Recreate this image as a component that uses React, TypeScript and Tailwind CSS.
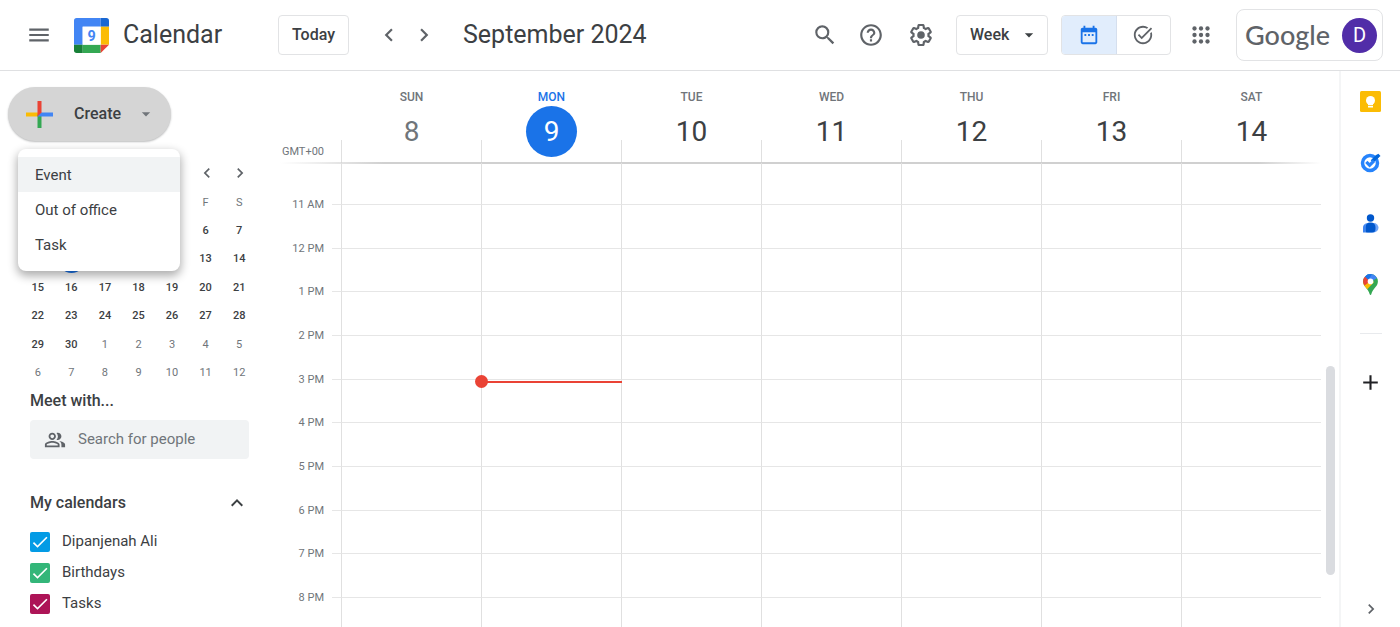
import { useState } from "react";
import {
  MdAdd,
  MdArrowDropDown,
  MdCheck,
  MdChevronLeft,
  MdChevronRight,
  MdDateRange,
  MdExpandLess,
  MdHelpOutline,
  MdMenu,
  MdOutlinePeopleAlt,
  MdSearch,
  MdTaskAlt,
} from "react-icons/md";

type Day = { name: string; date: number; past?: boolean; today?: boolean };

const DAYS: Day[] = [
  { name: "SUN", date: 8, past: true },
  { name: "MON", date: 9, today: true },
  { name: "TUE", date: 10 },
  { name: "WED", date: 11 },
  { name: "THU", date: 12 },
  { name: "FRI", date: 13 },
  { name: "SAT", date: 14 },
];

// each row ends on the line of the hour that it names
const HOURS = [
  "11 AM",
  "12 PM",
  "1 PM",
  "2 PM",
  "3 PM",
  "4 PM",
  "5 PM",
  "6 PM",
  "7 PM",
  "8 PM",
  "",
];

const WEEKDAYS = ["S", "M", "T", "W", "T", "F", "S"];

const MENU = ["Event", "Out of office", "Task"];

const CALENDARS = [
  { name: "Dipanjenah Ali", color: "bg-[#039be5]" },
  { name: "Birthdays", color: "bg-[#33b679]" },
  { name: "Tasks", color: "bg-[#ad1457]" },
];

// 1 September 2024 is a Sunday, so the month starts in the first cell
const WEEKS = Array.from({ length: 6 }, (_, w) =>
  Array.from({ length: 7 }, (_, d) => {
    const n = w * 7 + d + 1;
    return n > 30 ? { date: n - 30, other: true } : { date: n, other: false };
  }),
);

function CalendarLogo() {
  return (
    <svg viewBox="0 0 105 105" className="size-[35px]" role="img" aria-label="Calendar logo">
      <path d="M8 0h72v26H26v54H0V8a8 8 0 0 1 8-8z" fill="#4285f4" />
      <path d="M80 0h17a8 8 0 0 1 8 8v18H80z" fill="#1967d2" />
      <path d="M80 26h25v54H80z" fill="#fbbc04" />
      <path d="M26 80h54v25H26z" fill="#34a853" />
      <path d="M0 80h26v25H8a8 8 0 0 1-8-8z" fill="#188038" />
      <path d="M80 80h25l-25 25z" fill="#ea4335" />
      <path d="M26 26h54v54H26z" fill="#fff" />
      <text
        x="53"
        y="68"
        textAnchor="middle"
        fontSize="43"
        fontWeight="700"
        fontFamily="Roboto, sans-serif"
        fill="#4285f4"
      >
        9
      </text>
    </svg>
  );
}

function SettingsIcon() {
  return (
    <svg viewBox="0 0 24 24" fill="currentColor" className="size-[26px]">
      <path d="M13.85 22.25h-3.7c-.74 0-1.36-.54-1.45-1.27l-.27-1.89c-.27-.14-.53-.29-.79-.46l-1.8.72c-.7.26-1.47-.03-1.81-.65L2.2 15.53c-.35-.66-.2-1.44.36-1.88l1.53-1.19c-.01-.15-.02-.3-.02-.46 0-.15.01-.31.02-.46l-1.52-1.19c-.59-.45-.74-1.26-.37-1.88l1.85-3.19c.34-.62 1.11-.9 1.79-.63l1.81.73c.26-.17.52-.32.78-.46l.27-1.91c.09-.7.71-1.25 1.44-1.25h3.7c.74 0 1.36.54 1.45 1.27l.27 1.89c.27.14.53.29.79.46l1.8-.72c.71-.26 1.48.03 1.82.65l1.84 3.18c.36.66.2 1.44-.36 1.88l-1.52 1.19c.01.15.02.3.02.46s-.01.31-.02.46l1.52 1.19c.56.45.72 1.23.37 1.86l-1.86 3.22c-.34.62-1.11.9-1.8.63l-1.8-.72c-.26.17-.52.32-.78.46l-.27 1.91c-.1.68-.72 1.22-1.46 1.22zm-3.23-2h2.76l.37-2.55.53-.22c.44-.18.88-.44 1.34-.78l.45-.34 2.38.96 1.38-2.4-2.03-1.58.07-.56c.03-.26.06-.51.06-.78s-.03-.53-.06-.78l-.07-.56 2.03-1.58-1.39-2.4-2.39.96-.45-.35c-.42-.32-.87-.58-1.33-.77l-.52-.22-.37-2.55h-2.76l-.37 2.55-.53.21c-.44.19-.88.44-1.34.79l-.45.33-2.38-.95-1.39 2.39 2.03 1.58-.07.56a7 7 0 0 0-.06.79c0 .26.02.53.06.78l.07.56-2.03 1.58 1.38 2.4 2.39-.96.45.35c.43.33.86.58 1.33.77l.53.22.38 2.55z" />
      <circle cx="12" cy="12" r="3.5" />
    </svg>
  );
}

function AppsIcon() {
  return (
    <svg viewBox="0 0 24 24" fill="currentColor" className="size-[26px]">
      {[6, 12, 18].map((y) =>
        [6, 12, 18].map((x) => <circle key={`${x}-${y}`} cx={x} cy={y} r="2" />),
      )}
    </svg>
  );
}

function CreatePlusIcon() {
  return (
    <svg viewBox="0 0 27 27" className="size-[27px]">
      <path d="M0 11.500h13.500v4H0z" fill="#fbbc04" />
      <path d="M11.500 13.500h4V27h-4z" fill="#34a853" />
      <path d="M13.500 11.500H27v4H11.500z" fill="#4285f4" />
      <path d="M11.500 0h4v11.500l-4 4z" fill="#ea4335" />
    </svg>
  );
}

function KeepIcon() {
  return (
    <svg viewBox="0 0 21 21" className="size-[21px]">
      <rect width="21" height="21" rx="1.500" fill="#fbbc04" />
      <circle cx="10.500" cy="9.500" r="4.500" fill="#fff" />
      <path d="M8 12.500h5v1.800H8zM8 15h5v1.500H8z" fill="#fff" />
    </svg>
  );
}

function TasksIcon() {
  return (
    <svg viewBox="0 0 21 21" className="size-[21px]">
      <circle cx="10" cy="11" r="7.500" fill="none" stroke="#2684fc" strokeWidth="3.500" />
      <path d="M12 9.500 17.500 4" fill="none" stroke="#0066da" strokeWidth="3.500" />
      <path d="M15.800 3.200 18.400 1.800 20.500 4 17 7z" fill="#0066da" />
      <path d="M6.300 9.900l3.300 3.300L14 8.800" fill="none" stroke="#2684fc" strokeWidth="3.200" />
    </svg>
  );
}

function ContactsIcon() {
  return (
    <svg viewBox="0 0 21 21" className="size-[21px]">
      <circle cx="10.500" cy="5" r="3.700" fill="#0057cc" />
      <rect x="3" y="10" width="15.500" height="9.500" rx="4.700" fill="#6ea4f8" />
      <path
        d="M5.500 19.500V14a4.500 4.500 0 0 1 4.500-4.500h1a4.500 4.500 0 0 1 4.500 4.500v2a3.500 3.500 0 0 1-3.500 3.500z"
        fill="#0057cc"
      />
      <path d="M3 19.500V15a5 5 0 0 1 2.500-4.300v8.800z" fill="#3c83f0" />
    </svg>
  );
}

function MapsIcon() {
  return (
    <svg viewBox="0 0 15 21" className="h-[21px] w-[15px]">
      <clipPath id="pin">
        <path d="M7.500 0A7.400 7.400 0 0 0 .1 7.400c0 5.400 5.200 6.600 6.600 12.800.2.900 1.400.9 1.600 0 1.400-6.200 6.600-7.400 6.600-12.800A7.400 7.400 0 0 0 7.500 0z" />
      </clipPath>
      <g clipPath="url(#pin)">
        <path d="M0 0h15v21H0z" fill="#34a853" />
        <path d="M0 9 5 5.500 11 8 3.500 16 0 14z" fill="#fbbc04" />
        <path d="M0 0 3 2.500 7.500 7 1.500 11.500 0 9z" fill="#ea4335" />
        <path d="M2 2.500 4 0h11v3.500L7.500 8z" fill="#4285f4" />
        <path d="M2 2.500 4 0h5L5.500 6z" fill="#1a73e8" />
      </g>
      <circle cx="7.500" cy="7.400" r="2.800" fill="#fff" />
    </svg>
  );
}

function TopBar() {
  const [view, setView] = useState("Week");
  return (
    <header className="flex h-[71px] shrink-0 items-center border-b border-[#dfe0e2] pr-[17px] text-[#5f6368]">
      <div className="flex w-[278px] shrink-0 items-center pl-[26px]">
        <button type="button" aria-label="Main menu">
          <MdMenu size={26} />
        </button>
        <a href="#calendar" className="ml-[22px] flex items-center gap-3.5">
          <CalendarLogo />
          <span className="text-[25px] text-[#3c4043]">Calendar</span>
        </a>
      </div>
      <button
        type="button"
        className="h-10 w-[71px] shrink-0 rounded border border-[#e2e3e5] text-base font-medium text-[#3c4043]"
      >
        Today
      </button>
      <div className="ml-[27px] flex gap-[9px]">
        <button type="button" aria-label="Previous week">
          <MdChevronLeft size={26} />
        </button>
        <button type="button" aria-label="Next week">
          <MdChevronRight size={26} />
        </button>
      </div>
      <h1 className="ml-[26px] text-[25px] whitespace-nowrap text-[#3c4043]">September 2024</h1>

      <div className="ml-auto flex shrink-0 items-center">
        <button type="button" aria-label="Search">
          <MdSearch size={26} />
        </button>
        <button type="button" aria-label="Support" className="ml-5">
          <MdHelpOutline size={26} />
        </button>
        <button type="button" aria-label="Settings" className="ml-6">
          <SettingsIcon />
        </button>
        <div className="relative ml-[22px]">
          <select
            aria-label="View"
            value={view}
            onChange={(e) => setView(e.target.value)}
            className="h-10 w-[92px] appearance-none rounded border border-[#e2e3e5] bg-white pl-[13px] text-base font-medium text-[#3c4043]"
          >
            <option>Day</option>
            <option>Week</option>
            <option>Month</option>
          </select>
          <MdArrowDropDown
            size={20}
            className="pointer-events-none absolute top-2.5 right-[9px] text-[#3c4043]"
          />
        </div>
        <div className="ml-[13px] flex h-10 w-[110px] overflow-hidden rounded border border-[#e2e3e5]">
          <button
            type="button"
            aria-label="Switch to Calendar"
            className="flex flex-1 items-center justify-center border-r border-[#d5dfee] bg-[#e1edfc] text-[#1a73e8]"
          >
            <MdDateRange size={22} />
          </button>
          <button
            type="button"
            aria-label="Switch to Tasks"
            className="flex flex-1 items-center justify-center"
          >
            <MdTaskAlt size={22} />
          </button>
        </div>
        <button type="button" aria-label="Google apps" className="ml-[17px]">
          <AppsIcon />
        </button>
        <a
          href="#account"
          className="ml-[22px] flex h-[52px] w-[147px] items-center justify-between rounded-lg border border-[#e2e3e5] pr-[5px] pl-2"
        >
          <span className="font-[Lato,sans-serif] text-[27px] leading-8 font-medium text-[#5f6368]">
            Google
          </span>
          <span className="flex size-[35px] items-center justify-center rounded-full bg-[#512da8] text-xl text-white">
            D
          </span>
        </a>
      </div>
    </header>
  );
}

function CreateMenu() {
  return (
    <div className="relative ml-2 w-[163px]">
      <button
        type="button"
        aria-haspopup="menu"
        aria-expanded="true"
        className="flex h-[54px] w-full items-center rounded-full bg-[#d5d5d5] pl-[18px] text-base font-medium text-[#3c4043] shadow-[0_1px_2px_rgba(60,64,67,0.35)]"
      >
        <CreatePlusIcon />
        <span className="ml-[21px]">Create</span>
        <MdArrowDropDown size={20} className="ml-[15px] text-[#70757a]" />
      </button>
      <ul
        role="menu"
        className="absolute top-[62px] left-[10px] z-10 w-[162px] rounded-lg bg-white pt-2 pb-[9px] shadow-[0_4px_10px_1px_rgba(0,0,0,0.32)]"
      >
        {MENU.map((label, i) => (
          <li key={label} role="none">
            <button
              type="button"
              role="menuitem"
              className={`block h-[35px] w-full pt-0.5 pl-[17px] text-left text-[15px] text-[#3c4043] ${
                i === 0 ? "bg-[#f1f3f4]" : ""
              }`}
            >
              {label}
            </button>
          </li>
        ))}
      </ul>
    </div>
  );
}

function MiniMonth() {
  return (
    <section className="mt-4 ml-[21px] w-[235px]">
      <div className="flex h-8 items-center justify-end gap-[13px] pr-1.5 text-[#5f6368]">
        <button type="button" aria-label="Previous month">
          <MdChevronLeft size={20} />
        </button>
        <button type="button" aria-label="Next month">
          <MdChevronRight size={20} />
        </button>
      </div>
      <table className="mt-px w-full table-fixed text-center text-[11px] text-[#3c4043]">
        <thead>
          <tr className="h-[27px] text-[#70757a]">
            {WEEKDAYS.map((d, i) => (
              // the open create menu lies over the first five
              <th key={i} className={`p-0 font-normal ${i < 5 ? "invisible" : ""}`}>
                {d}
              </th>
            ))}
          </tr>
        </thead>
        <tbody>
          {WEEKS.map((week, w) => (
            <tr key={w} className="odd:h-7 even:h-[29px]">
              {week.map(({ date, other }) => (
                <td key={date} className="p-0">
                  <button
                    type="button"
                    className={`size-[27px] rounded-full align-middle ${
                      other
                        ? "text-[#70757a]"
                        : date === 9
                          ? "bg-[#1a73e8] font-medium text-white"
                          : "font-medium"
                    }`}
                  >
                    {date}
                  </button>
                </td>
              ))}
            </tr>
          ))}
        </tbody>
      </table>
    </section>
  );
}

function SideBar() {
  return (
    <aside className="w-64 shrink-0 pt-4 text-[#3c4043]">
      <CreateMenu />
      <MiniMonth />
      <div className="mr-[7px] ml-[30px]">
        <label htmlFor="people" className="block text-base leading-[26px] font-medium">
          Meet with...
        </label>
        <div className="mt-1.5 flex h-[39px] items-center gap-3 rounded bg-[#f1f3f4] pl-3.5 text-[#5f6368]">
          <MdOutlinePeopleAlt size={22} className="shrink-0" />
          <input
            id="people"
            type="text"
            placeholder="Search for people"
            className="min-w-0 flex-1 bg-transparent text-[15px] outline-none placeholder:text-[#70757a]"
          />
        </div>
        <div className="mt-6 flex h-10 items-center justify-between">
          <h2 className="text-base font-medium">My calendars</h2>
          <button type="button" aria-label="Collapse my calendars">
            <MdExpandLess size={24} />
          </button>
        </div>
        <ul className="mt-[3px]">
          {CALENDARS.map((c) => (
            <li key={c.name}>
              <label className="flex h-[31px] items-center gap-3 text-[15px]">
                <span className="grid size-5 shrink-0 place-items-center">
                  <input
                    type="checkbox"
                    defaultChecked
                    className={`col-start-1 row-start-1 size-5 appearance-none rounded-xs ${c.color}`}
                  />
                  <MdCheck
                    size={20}
                    className="pointer-events-none col-start-1 row-start-1 text-white"
                  />
                </span>
                {c.name}
              </label>
            </li>
          ))}
        </ul>
      </div>
    </aside>
  );
}

function DayHeader({ day }: { day: Day }) {
  return (
    <div className="flex min-w-0 flex-1 items-end">
      <span className="h-[23px] w-px bg-[#e0e0e0]" />
      <div
        className={`flex h-[92px] flex-1 flex-col items-center pt-[17px] ${
          day.today ? "text-[#1a73e8]" : day.past ? "text-[#70757a]" : "text-[#3c4043]"
        }`}
      >
        <span
          className={`text-xs leading-[18px] font-medium ${day.today ? "" : "text-[#70757a]"}`}
        >
          {day.name}
        </span>
        <span
          className={`flex size-[51px] items-center justify-center rounded-full text-[28px] ${
            day.today ? "bg-[#1a73e8] text-white" : ""
          }`}
        >
          {day.date}
        </span>
      </div>
    </div>
  );
}

function HourRow({ label, first, last }: { label: string; first: boolean; last: boolean }) {
  const line = last ? "" : "border-b border-b-[#e6e6e6]";
  return (
    <div className={`flex ${first ? "h-[42px]" : last ? "h-[29px]" : "min-h-10 flex-1"}`}>
      <span className="w-[68px] shrink-0 translate-y-1/2 self-end text-right text-[11px] leading-4 text-[#70757a]">
        {label}
      </span>
      <span className={`ml-2 w-[9px] shrink-0 ${line}`} />
      {DAYS.map((day) => (
        <div
          key={day.name}
          className={`relative min-w-0 flex-1 border-l border-l-[#e0e0e0] ${line}`}
        >
          {/* current time */}
          {day.today && label === "4 PM" && (
            <div className="absolute top-px -right-px left-0 z-10 h-0.5 bg-[#ea4335]">
              <span className="absolute -top-1.5 -left-[7px] size-[13px] rounded-full bg-[#ea4335]" />
            </div>
          )}
        </div>
      ))}
    </div>
  );
}

function WeekGrid() {
  return (
    <main className="flex min-w-0 flex-1 flex-col">
      <div className="flex">
        <div className="flex w-[85px] shrink-0 items-end justify-end pr-[17px] pb-[3px] text-[11px] leading-4 text-[#70757a]">
          GMT+00
        </div>
        {DAYS.map((day) => (
          <DayHeader key={day.name} day={day} />
        ))}
      </div>
      <div className="-mt-px ml-6 h-0.5 bg-[linear-gradient(90deg,transparent,#d0d0d0_10%,#d0d0d0_94%,transparent)]" />
      <div className="-mt-px flex flex-1 flex-col">
        {HOURS.map((label, i) => (
          <HourRow key={i} label={label} first={i === 0} last={i === HOURS.length - 1} />
        ))}
      </div>
    </main>
  );
}

function SideRail() {
  const apps = [
    { name: "Keep", Icon: KeepIcon },
    { name: "Tasks", Icon: TasksIcon },
    { name: "Contacts", Icon: ContactsIcon },
    { name: "Maps", Icon: MapsIcon },
  ];
  return (
    <nav className="flex w-[61px] shrink-0 flex-col items-center border-l-2 border-[#f4f5f6]">
      {apps.map(({ name, Icon }) => (
        <button
          key={name}
          type="button"
          aria-label={name}
          className="flex h-[61px] w-full items-center justify-center"
        >
          <Icon />
        </button>
      ))}
      <hr className="my-[18px] w-[22px] border-[#e8eaed]" />
      <button
        type="button"
        aria-label="Get add-ons"
        className="flex h-[61px] w-full items-center justify-center text-[#202124]"
      >
        <MdAdd size={25} />
      </button>
      <button
        type="button"
        aria-label="Hide side panel"
        className="mt-auto flex h-9 w-full items-center justify-center text-[#5f6368]"
      >
        <MdChevronRight size={20} />
      </button>
    </nav>
  );
}

export default function App() {
  return (
    <div className="flex min-h-screen flex-col bg-white font-[Roboto,sans-serif]">
      <TopBar />
      <div className="flex flex-1">
        <SideBar />
        <WeekGrid />
        <div className="w-[18px] shrink-0 pt-[295px] pl-[5px]">
          <div className="h-[209px] w-[9px] rounded-full bg-[#dadce0]" />
        </div>
        <SideRail />
      </div>
    </div>
  );
}
